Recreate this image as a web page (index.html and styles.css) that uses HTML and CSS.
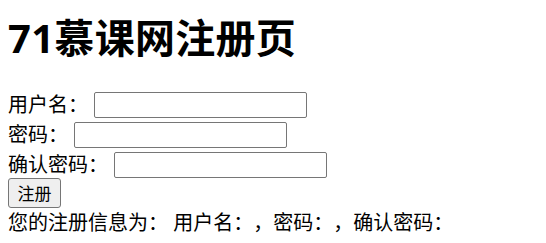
FILE: index.html
```html
<!DOCTYPE html>
<html lang="zh-CN">
<head>
<meta charset="utf-8">
<title>71慕课网注册页</title>
<link rel="stylesheet" href="styles.css">
</head>
<body>
<h1 class="title">71慕课网注册页</h1>
<form class="form">
  <div class="row"><label class="label">用户名：</label><input class="field" type="text"></div>
  <div class="row"><label class="label">密码：</label><input class="field" type="password"></div>
  <div class="row"><label class="label">确认密码：</label><input class="field" type="password"></div>
  <button class="btn" type="button">注册</button>
  <div class="info">您的注册信息为： 用户名：，密码：，确认密码：</div>
</form>
</body>
</html>
```

FILE: styles.css
```css
body {
  margin: 8px;
  font-family: "Noto Sans", "Noto Sans CJK SC", sans-serif;
  font-size: 20px;
  color: #000;
  background: #fff;
  text-spacing-trim: space-all;
  font-feature-settings: "halt" 0, "chws" 0;
}

.title {
  margin: 0 0 20px;
  font-size: 40px;
  line-height: 60px;
  font-weight: bold;
  letter-spacing: 0.3px;
}

.form {
  display: flex;
  flex-direction: column;
  align-items: flex-start;
}

.row {
  display: flex;
  align-items: center;
  gap: 6px;
  height: 26px;
  margin-top: 4px;
}

.label {
  line-height: 26px;
  white-space: nowrap;
}

.field {
  box-sizing: border-box;
  width: 213px;
  height: 26px;
  margin: 0;
  padding: 1px 3px;
  border: 1px solid #767676;
  border-radius: 2px;
  background: #fff;
  font-size: 16px;
}

.btn {
  box-sizing: border-box;
  width: 53px;
  height: 30px;
  margin: 0;
  padding: 0;
  border: 1px solid #767676;
  border-radius: 3px;
  background: #efefef;
  color: #000;
  font-family: "Noto Sans CJK SC", sans-serif;
  font-size: 17px;
  line-height: 28px;
}

.info {
  height: 30px;
  line-height: 30px;
  white-space: nowrap;
}
```
